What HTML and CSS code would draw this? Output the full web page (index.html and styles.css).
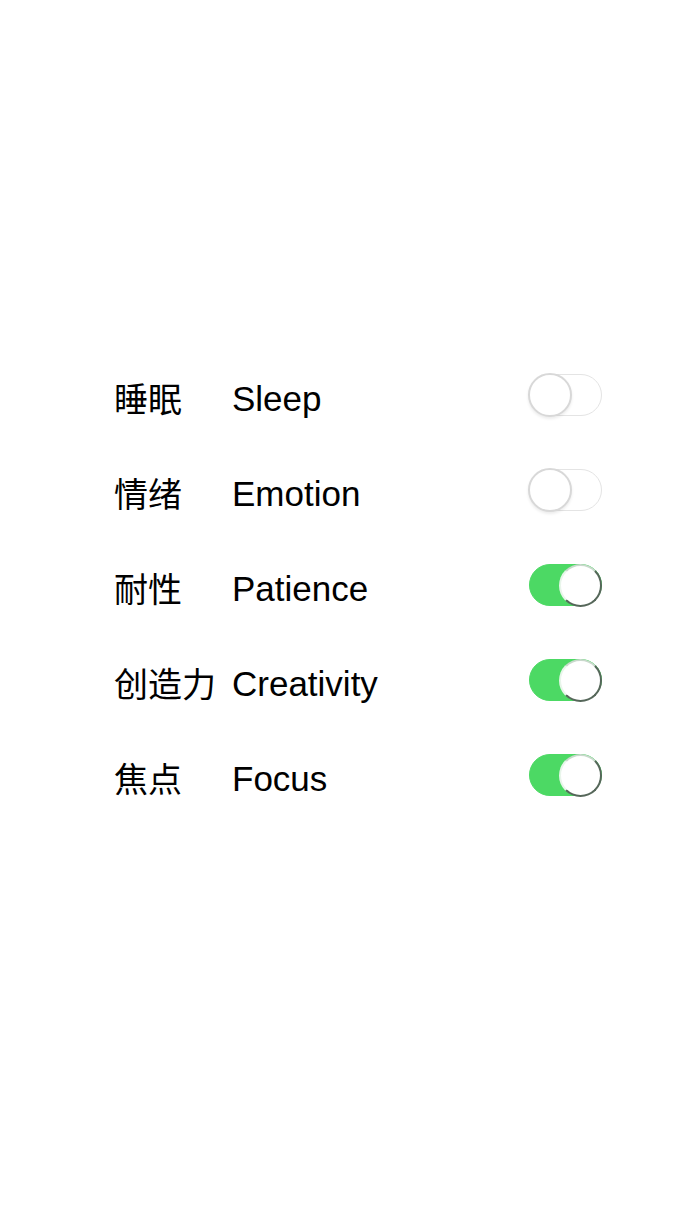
FILE: index.html
```html
<!DOCTYPE html>
<html>
    <head>
        <meta charset="UTF-8">
        <meta name="viewport" content="width=device-width, initial-scale=1.0">
        <link rel="stylesheet" href="styles.css">
    </head>
    <body>
        <div class="settings">
            <div class="row">
                <span class="zh">睡眠</span>
                <span class="en">Sleep</span>
                <span class="switch"><span class="knob"></span></span>
            </div>
            <div class="row">
                <span class="zh">情绪</span>
                <span class="en">Emotion</span>
                <span class="switch"><span class="knob"></span></span>
            </div>
            <div class="row">
                <span class="zh">耐性</span>
                <span class="en">Patience</span>
                <span class="switch on"><span class="knob"></span></span>
            </div>
            <div class="row">
                <span class="zh">创造力</span>
                <span class="en">Creativity</span>
                <span class="switch on"><span class="knob"></span></span>
            </div>
            <div class="row">
                <span class="zh">焦点</span>
                <span class="en">Focus</span>
                <span class="switch on"><span class="knob"></span></span>
            </div>
        </div>
    </body>
</html>
```

FILE: styles.css
```css
body {
    margin: 0;
    background: #fff;
    color: #000;
}

.settings {
    display: flex;
    flex-direction: column;
    padding: 347px 88px 0 114px;
}

.row {
    display: grid;
    grid-template-columns: 118px 1fr auto;
    align-items: center;
    height: 95px;
}

.zh {
    font-family: "Noto Sans CJK SC", sans-serif;
    font-size: 34px;
    line-height: 40px;
    padding-top: 7px;
}

.en {
    font-family: "Liberation Sans", Arial, sans-serif;
    font-size: 35px;
    line-height: 40px;
    padding-top: 9px;
}

.switch {
    display: flex;
    justify-content: flex-start;
    width: 73px;
    height: 42px;
    border-radius: 21px;
    border: 1px solid #e4e4e4;
    background: #fff;
    box-sizing: border-box;
}

.switch .knob {
    width: 44px;
    height: 44px;
    margin: -2px 0 0 -2px;
    border-radius: 50%;
    background: #fff;
    border: 2px solid #d8d8d8;
    box-sizing: border-box;
    box-shadow: 0 2px 3px rgba(0, 0, 0, 0.08);
}

.switch.on {
    justify-content: flex-end;
    border-color: #4cd964;
    background: #4cd964;
}

.switch.on .knob {
    width: 43px;
    height: 43px;
    margin: -1px -1px 0 0;
    border: 2px solid #56675a;
    border-left-color: #e8f5ea;
    border-top-color: #c9d9cc;
    box-shadow: none;
}
```
